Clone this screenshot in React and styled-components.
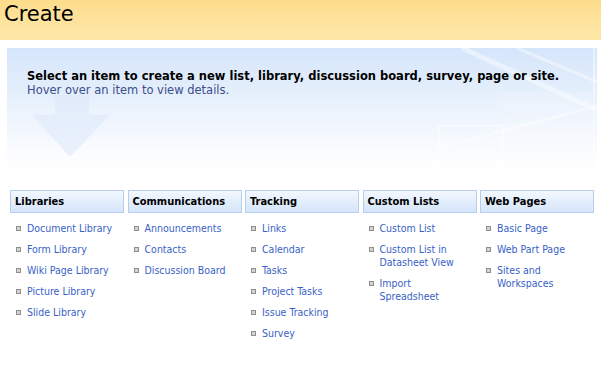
import React from 'react';
import styled, { createGlobalStyle } from 'styled-components';

const GlobalStyle = createGlobalStyle`
  html, body {
    margin: 0;
    padding: 0;
    background: #ffffff;
  }
  body {
    font-family: Tahoma, "DejaVu Sans Condensed", "Liberation Sans", sans-serif;
  }
`;

const sections = [
  {
    title: 'Libraries',
    items: ['Document Library', 'Form Library', 'Wiki Page Library', 'Picture Library', 'Slide Library'],
  },
  {
    title: 'Communications',
    items: ['Announcements', 'Contacts', 'Discussion Board'],
  },
  {
    title: 'Tracking',
    items: ['Links', 'Calendar', 'Tasks', 'Project Tasks', 'Issue Tracking', 'Survey'],
  },
  {
    title: 'Custom Lists',
    items: ['Custom List', 'Custom List in Datasheet View', 'Import Spreadsheet'],
  },
  {
    title: 'Web Pages',
    items: ['Basic Page', 'Web Part Page', 'Sites and Workspaces'],
  },
];

const App = () => (
  <Page>
    <GlobalStyle />
    <TitleBar>
      <Title>Create</Title>
    </TitleBar>

    {/* intro banner */}
    <Banner>
      <BannerArt viewBox="0 0 590 122" preserveAspectRatio="none" aria-hidden="true">
        <path d="M48 47 H82 V67 H103 L63 109 L25 67 H48 Z" fill="#dde9fa" opacity="0.6" />
        <path d="M455 0 L590 62" stroke="#ffffff" strokeWidth="5" opacity="0.45" />
        <path d="M510 0 L590 34" stroke="#ffffff" strokeWidth="3" opacity="0.4" />
        <path d="M430 100 L590 58" stroke="#ffffff" strokeWidth="3" opacity="0.45" />
        <rect x="432" y="78" width="64" height="50" fill="none" stroke="#ffffff" strokeWidth="2" opacity="0.4" />
        <rect x="490" y="45" width="95" height="85" fill="#ffffff" opacity="0.15" />
        <path d="M587 0 V122" stroke="#ffffff" strokeWidth="2" opacity="0.5" />
      </BannerArt>
      <Lead>Select an item to create a new list, library, discussion board, survey, page or site.</Lead>
      <Hint>Hover over an item to view details.</Hint>
    </Banner>

    {/* categories */}
    <Columns>
      {sections.map((section) => (
        <Column key={section.title}>
          <ColumnHeader>{section.title}</ColumnHeader>
          <ItemList>
            {section.items.map((item) => (
              <Item key={item}>
                <ItemLink href="#">{item}</ItemLink>
              </Item>
            ))}
          </ItemList>
        </Column>
      ))}
    </Columns>
  </Page>
);

const Page = styled.div`
  width: 601px;
  height: 374px;
  overflow: hidden;
  background: #ffffff;
`;

const TitleBar = styled.div`
  height: 40px;
  background: linear-gradient(to bottom, #fddc8b 0%, #fee5a2 70%, #fee8a8 100%);
  box-sizing: border-box;
  padding: 0 0 0 4px;
`;

const Title = styled.h1`
  margin: 0;
  font-family: "DejaVu Sans", Verdana, sans-serif;
  font-weight: normal;
  font-size: 21px;
  line-height: 28px;
  color: #000000;
`;

const Banner = styled.div`
  position: relative;
  margin: 8px 4px 0 7px;
  height: 122px;
  box-sizing: border-box;
  padding: 21px 0 0 20px;
  background: linear-gradient(to bottom, #d5e5fb 0%, #e6f0fc 40%, #f6f9fe 75%, #ffffff 100%);
  font-family: "DejaVu Sans", Verdana, sans-serif;
`;

const BannerArt = styled.svg`
  position: absolute;
  inset: 0;
  width: 100%;
  height: 100%;
`;

const Lead = styled.div`
  position: relative;
  font-weight: bold;
  font-size: 11.5px;
  line-height: 14px;
  color: #000000;
`;

const Hint = styled.div`
  position: relative;
  font-size: 11.5px;
  line-height: 14px;
  color: #3c4d8a;
`;

const Columns = styled.div`
  display: grid;
  grid-template-columns: repeat(5, 1fr);
  column-gap: 3.5px;
  margin: 20px 7px 0 10px;
`;

const Column = styled.div`
  display: flex;
  flex-direction: column;
`;

const ColumnHeader = styled.div`
  height: 23px;
  box-sizing: border-box;
  border: 1px solid #b6cdee;
  background: linear-gradient(to bottom, #f3f8fe 0%, #e2edfc 55%, #d6e6fb 100%);
  padding: 0 0 0 4px;
  font-weight: bold;
  font-size: 11px;
  line-height: 21px;
  color: #000000;
`;

const ItemList = styled.ul`
  list-style: none;
  margin: 9px 0 0 0;
  padding: 0;
`;

const Item = styled.li`
  position: relative;
  padding: 0 4px 0 17px;
  margin-bottom: 8px;
  font-size: 10.5px;
  line-height: 13px;

  &::before {
    content: '';
    position: absolute;
    left: 6px;
    top: 4px;
    width: 3px;
    height: 3px;
    border: 1px solid #8f8f8f;
    background: #d2d2d2;
  }
`;

const ItemLink = styled.a`
  color: #3a5fc8;
  text-decoration: none;
`;

export default App;
